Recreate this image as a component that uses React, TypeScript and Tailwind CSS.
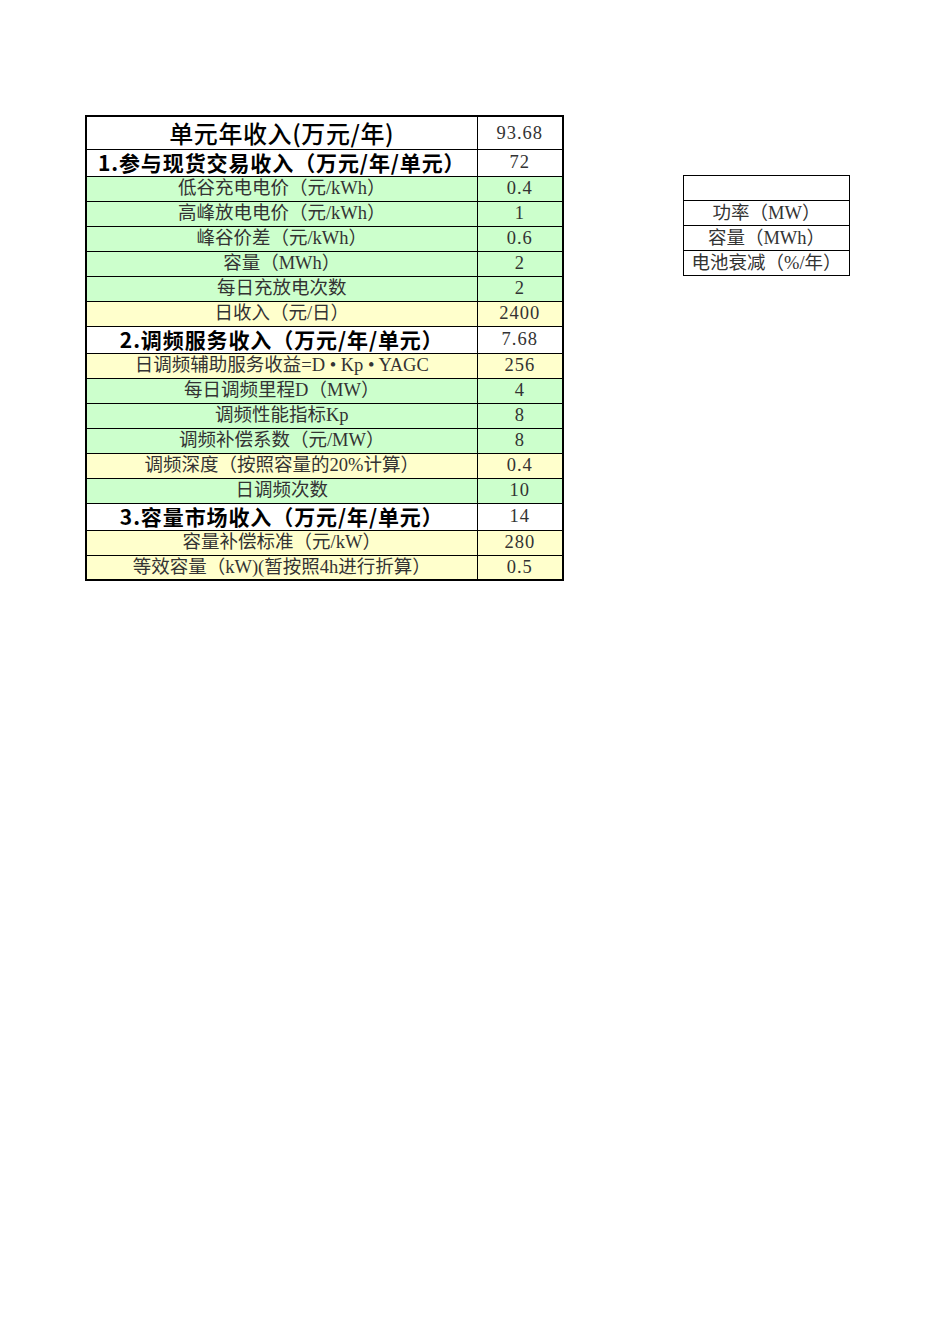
type Kind = "title" | "section" | "green" | "yellow";

type Row = { label: string; value: string; kind: Kind };

const rows: Row[] = [
  { label: "单元年收入(万元/年)", value: "93.68", kind: "title" },
  { label: "1.参与现货交易收入（万元/年/单元）", value: "72", kind: "section" },
  { label: "低谷充电电价（元/kWh）", value: "0.4", kind: "green" },
  { label: "高峰放电电价（元/kWh）", value: "1", kind: "green" },
  { label: "峰谷价差（元/kWh）", value: "0.6", kind: "green" },
  { label: "容量（MWh）", value: "2", kind: "green" },
  { label: "每日充放电次数", value: "2", kind: "green" },
  { label: "日收入（元/日）", value: "2400", kind: "yellow" },
  { label: "2.调频服务收入（万元/年/单元）", value: "7.68", kind: "section" },
  { label: "日调频辅助服务收益=D • Kp • YAGC", value: "256", kind: "yellow" },
  { label: "每日调频里程D（MW）", value: "4", kind: "green" },
  { label: "调频性能指标Kp", value: "8", kind: "green" },
  { label: "调频补偿系数（元/MW）", value: "8", kind: "green" },
  { label: "调频深度（按照容量的20%计算）", value: "0.4", kind: "yellow" },
  { label: "日调频次数", value: "10", kind: "green" },
  { label: "3.容量市场收入（万元/年/单元）", value: "14", kind: "section" },
  { label: "容量补偿标准（元/kW）", value: "280", kind: "yellow" },
  { label: "等效容量（kW)(暂按照4h进行折算）", value: "0.5", kind: "yellow" },
];

const params = ["", "功率（MW）", "容量（MWh）", "电池衰减（%/年）"];

const serif = "font-['Liberation_Serif','Noto_Sans_CJK_SC',serif]";
const sans = "font-['Noto_Sans_CJK_SC','Liberation_Sans',sans-serif]";

function rowHeight(kind: Kind) {
  if (kind === "title") return "h-[33px]";
  if (kind === "section") return "h-[27px]";
  return "h-[25px]";
}

function rowBg(kind: Kind) {
  if (kind === "green") return "bg-[#ccffcc]";
  if (kind === "yellow") return "bg-[#ffffcc]";
  return "bg-white";
}

function labelClass(kind: Kind) {
  if (kind === "title") return `${sans} text-[24px] tracking-[0.6px] font-medium text-black`;
  if (kind === "section") return `${sans} text-[21px] tracking-[0.9px] font-bold text-black`;
  return `${serif} text-[18.5px] text-[#333]`;
}

export default function App() {
  return (
    <div className="min-h-[1344px] w-[950px] bg-white flex items-start">
      {/* main sheet */}
      <table className="ml-[85px] mt-[115px] border-collapse border-2 border-black table-fixed">
        <colgroup>
          <col className="w-[391px]" />
          <col className="w-[86px]" />
        </colgroup>
        <tbody>
          {rows.map((r) => (
            <tr key={r.label} className={`${rowHeight(r.kind)} ${rowBg(r.kind)}`}>
              <td className="border border-black p-0 text-center align-middle leading-none whitespace-nowrap">
                <span className={labelClass(r.kind)}>{r.label}</span>
              </td>
              <td
                className={`border border-black p-0 text-center align-middle leading-none ${serif} text-[18.5px] tracking-[1px] text-[#333] ${r.kind === "section" || r.kind === "title" ? "bg-white" : ""}`}
              >
                {r.value}
              </td>
            </tr>
          ))}
        </tbody>
      </table>

      {/* parameters box */}
      <table className="ml-[119px] mt-[175px] border-collapse border border-black table-fixed">
        <colgroup>
          <col className="w-[166px]" />
        </colgroup>
        <tbody>
          {params.map((p, i) => (
            <tr key={i} className="h-[25px] bg-white">
              <td className={`border border-black p-0 text-center align-middle leading-none whitespace-nowrap ${serif} text-[18.5px] text-[#333]`}>
                {p}
              </td>
            </tr>
          ))}
        </tbody>
      </table>
    </div>
  );
}
